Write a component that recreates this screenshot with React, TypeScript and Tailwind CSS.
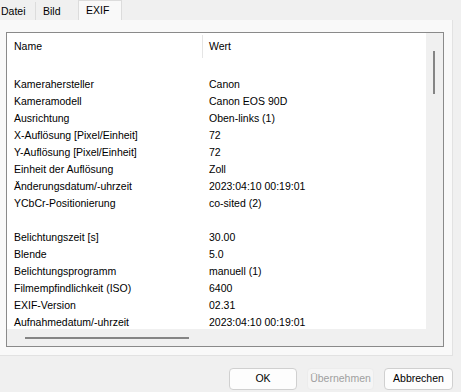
import React from "react";

const rows: [string, string][] = [
  ["", ""],
  ["Kamerahersteller", "Canon"],
  ["Kameramodell", "Canon EOS 90D"],
  ["Ausrichtung", "Oben-links (1)"],
  ["X-Auflösung [Pixel/Einheit]", "72"],
  ["Y-Auflösung [Pixel/Einheit]", "72"],
  ["Einheit der Auflösung", "Zoll"],
  ["Änderungsdatum/-uhrzeit", "2023:04:10 00:19:01"],
  ["YCbCr-Positionierung", "co-sited (2)"],
  ["", ""],
  ["Belichtungszeit [s]", "30.00"],
  ["Blende", "5.0"],
  ["Belichtungsprogramm", "manuell (1)"],
  ["Filmempfindlichkeit (ISO)", "6400"],
  ["EXIF-Version", "02.31"],
  ["Aufnahmedatum/-uhrzeit", "2023:04:10 00:19:01"],
];

export default function App() {
  return (
    <div
      className="w-[461px] h-[392px] bg-[#f0f0f0] text-[10.5px] text-black overflow-hidden flex flex-col"
      style={{ fontFamily: '"Liberation Sans", Arial, sans-serif' }}
    >
      {/* Tab row */}
      <div className="h-[20px] flex items-end shrink-0">
        <div className="w-[36px] h-[18px] pl-[1px] leading-[18px] border-r border-[#dcdcdc] bg-[#f0f0f0]">
          Datei
        </div>
        <div className="w-[42px] h-[18px] pl-[7px] leading-[18px] bg-[#f0f0f0]">
          Bild
        </div>
        <div className="w-[44px] h-[20px] pl-[7px] leading-[18px] bg-[#f9f9f9] border-l border-r border-t border-[#dcdcdc]">
          EXIF
        </div>
      </div>

      {/* Tab panel */}
      <div className="w-[453px] h-[336px] shrink-0 bg-[#f9f9f9] border-r border-b border-[#e2e2e2] pt-[12px] pl-[6px]">
        <div className="w-[438px] h-[315px] border border-[#8a8a8a] bg-white flex">
          {/* content column */}
          <div className="w-[419px] flex flex-col">
            <div className="h-[296px] overflow-hidden">
              {/* header */}
              <div className="h-[26px] flex items-center">
                <div className="w-[195px] pl-[7px] leading-[26px]">Name</div>
                <div className="w-px h-[23px] bg-[#e5e5e5]" />
                <div className="pl-[6px] leading-[26px]">Wert</div>
              </div>
              {rows.map((r, i) => (
                <div key={i} className="h-[17px] flex leading-[17px] whitespace-nowrap">
                  <div className="w-[196px] pl-[7px]">{r[0]}</div>
                  <div className="pl-[6px]">{r[1]}</div>
                </div>
              ))}
            </div>
            {/* horizontal scrollbar */}
            <div className="h-[17px] bg-[#f0f0f0] flex items-center pl-[18px]">
              <div className="w-[164px] h-[2px] bg-[#858585]" />
            </div>
          </div>
          {/* vertical scrollbar */}
          <div className="w-[17px] h-full bg-[#f0f0f0] pt-[18px] pl-[7px]">
            <div className="w-[2px] h-[43px] bg-[#858585]" />
          </div>
        </div>
      </div>

      {/* Buttons */}
      <div className="flex justify-end pr-[8px] pt-[12px] gap-[10px]">
        <button className="w-[68px] h-[22px] rounded-[4px] border border-[#d0d0d0] bg-[#fdfdfd] text-black">
          OK
        </button>
        <button className="w-[67px] h-[22px] rounded-[4px] border border-[#ececec] bg-[#f5f5f5] text-[#a0a0a0]">
          Übernehmen
        </button>
        <button className="w-[69px] h-[22px] rounded-[4px] border border-[#d0d0d0] bg-[#fdfdfd] text-black">
          Abbrechen
        </button>
      </div>
    </div>
  );
}
